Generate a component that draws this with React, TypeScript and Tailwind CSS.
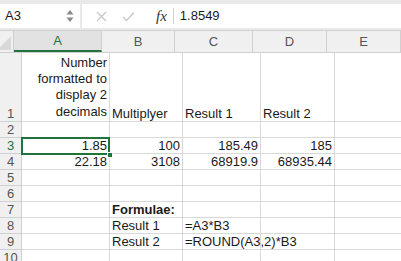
import React from 'react';

const cols = ['A', 'B', 'C', 'D', 'E'];

type Cell = { text?: string; align?: 'left' | 'right'; bold?: boolean };

const rows: { n: number; h: string; cells: Cell[] }[] = [
    { n: 1, h: 'h-[69px]', cells: [{ text: 'Number formatted to display 2 decimals', align: 'right' }, { text: 'Multiplyer' }, { text: 'Result 1' }, { text: 'Result 2' }, {}] },
    { n: 2, h: 'h-4', cells: [{}, {}, {}, {}, {}] },
    { n: 3, h: 'h-4', cells: [{ text: '1.85', align: 'right' }, { text: '100', align: 'right' }, { text: '185.49', align: 'right' }, { text: '185', align: 'right' }, {}] },
    { n: 4, h: 'h-4', cells: [{ text: '22.18', align: 'right' }, { text: '3108', align: 'right' }, { text: '68919.9', align: 'right' }, { text: '68935.44', align: 'right' }, {}] },
    { n: 5, h: 'h-4', cells: [{}, {}, {}, {}, {}] },
    { n: 6, h: 'h-4', cells: [{}, {}, {}, {}, {}] },
    { n: 7, h: 'h-4', cells: [{}, { text: 'Formulae:', bold: true }, {}, {}, {}] },
    { n: 8, h: 'h-4', cells: [{}, { text: 'Result 1' }, { text: '=A3*B3' }, {}, {}] },
    { n: 9, h: 'h-4', cells: [{}, { text: 'Result 2' }, { text: '=ROUND(A3,2)*B3' }, {}, {}] },
    { n: 10, h: 'h-4', cells: [{}, {}, {}, {}, {}] },
];

const colWidths = ['w-[88px]', 'w-[73px]', 'w-[78px]', 'w-[74px]', 'w-[74px]'];

export default function App() {
    return (
        <div className="w-[401px] h-[261px] overflow-hidden bg-white text-[13px] text-[#1a1a1a] font-['Liberation_Sans',Arial,sans-serif]">
            {/* formula bar */}
            <div className="h-[31px] bg-[#e9e9e9] pt-[4px] pb-[2px] flex gap-[2px] border-b border-[#d0d0d0]">
                <div className="w-[80px] bg-white flex items-center justify-between pl-[5px] pr-[6px]">
                    <span>A3</span>
                    <svg width="8" height="14" viewBox="0 0 8 14">
                        <path d="M4 1 L7.5 5.5 L0.5 5.5 Z" fill="#8a8a8a" />
                        <path d="M4 13 L7.5 8.5 L0.5 8.5 Z" fill="#8a8a8a" />
                    </svg>
                </div>
                <div className="flex-1 bg-white flex items-center">
                    <svg className="ml-[14px]" width="11" height="11" viewBox="0 0 11 11">
                        <path d="M1 1 L10 10 M10 1 L1 10" stroke="#c8c8c8" strokeWidth="1.4" />
                    </svg>
                    <svg className="ml-[15px]" width="13" height="11" viewBox="0 0 13 11">
                        <path d="M1 6 L4.5 9.5 L12 1.5" stroke="#c8c8c8" strokeWidth="1.4" fill="none" />
                    </svg>
                    <span className="ml-[21px] italic text-[15px] text-[#333] font-['Liberation_Serif',serif]">fx</span>
                    <div className="ml-[6px] w-px h-[16px] bg-[#d0d0d0]" />
                    <span className="ml-[6px]">1.8549</span>
                </div>
            </div>

            {/* column headers */}
            <div className="flex h-[22px] bg-[#f0f0f0] border-b border-[#cfcfcf]">
                <div className="w-[22px] relative border-r border-[#d0d0d0]">
                    <svg className="absolute right-[2px] bottom-[2px]" width="14" height="14" viewBox="0 0 14 14">
                        <path d="M14 0 L14 14 L0 14 Z" fill="#d9d9d9" />
                    </svg>
                </div>
                {cols.map((c, i) => (
                    <div
                        key={c}
                        className={`${colWidths[i]} shrink-0 flex items-center justify-center border-r border-[#d0d0d0] ${c === 'A' ? 'bg-[#e2e2e2] text-[#21733d] border-b-2 border-b-[#21733d]' : 'text-[#555]'}`}
                    >
                        {c}
                    </div>
                ))}
            </div>

            {/* grid */}
            <div className="relative">
                {rows.map((r) => (
                    <div key={r.n} className={`flex ${r.h}`}>
                        <div className={`w-[22px] shrink-0 flex items-end justify-center bg-[#f0f0f0] border-r border-b border-[#d0d0d0] leading-[15px] ${r.n === 3 ? 'text-[#21733d] bg-[#e2e2e2]' : 'text-[#555]'}`}>
                            {r.n}
                        </div>
                        {r.cells.map((cell, i) => (
                            <div
                                key={i}
                                className={`${colWidths[i]} shrink-0 flex items-end border-r border-b border-[#d9d9d9] px-[2px] leading-[15px] whitespace-nowrap ${cell.align === 'right' ? 'justify-end text-right' : ''} ${cell.bold ? 'font-bold' : ''}`}
                            >
                                {r.n === 1 && i === 0 ? (
                                    <div className="whitespace-normal leading-[16.3px] pb-[1px]">Number formatted to display 2 decimals</div>
                                ) : (
                                    cell.text
                                )}
                            </div>
                        ))}
                    </div>
                ))}
                {/* selection A3 */}
                <div className="absolute left-[21px] top-[84px] w-[89px] h-[18px] border-2 border-[#21733d]" />
                <div className="absolute left-[107px] top-[99px] w-[6px] h-[6px] bg-[#21733d] border border-white" />
            </div>
        </div>
    );
}
